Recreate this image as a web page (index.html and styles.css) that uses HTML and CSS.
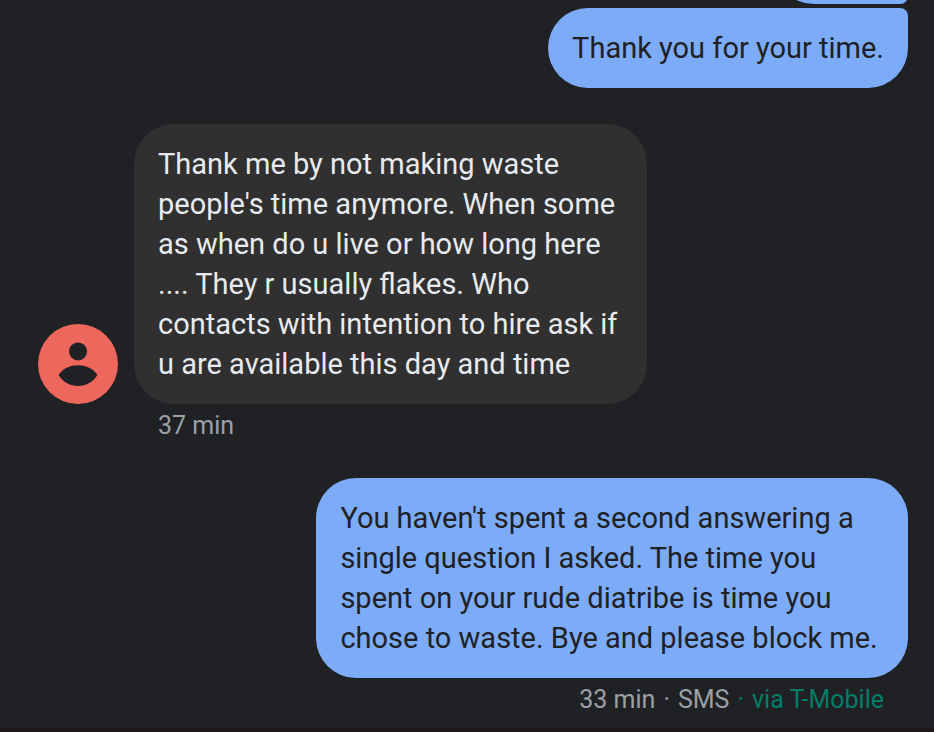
FILE: index.html
```html
<!DOCTYPE html>
<html lang="en">
<head>
<meta charset="utf-8">
<meta name="viewport" content="width=device-width, initial-scale=1">
<title>Messages</title>
<link rel="stylesheet" href="styles.css">
</head>
<body>
<main class="thread">
  <section class="group group-sent">
    <div class="bubble sent sent-first" aria-hidden="true"></div>
    <p class="bubble sent sent-last">Thank you for your time.</p>
  </section>

  <section class="group group-received">
    <svg class="avatar" viewBox="0 0 80 80" role="img" aria-label="Contact">
      <circle class="avatar-disc" cx="40" cy="40" r="40"/>
      <circle class="avatar-person" cx="40" cy="27.4" r="9"/>
      <path class="avatar-person" d="M20.6 51C24.5 44.5 32 41.2 40 41.2S55.5 44.5 59.4 51C54.5 58.5 48 62 40 62S25.500 58.500 20.600 51Z"/>
    </svg>
    <p class="bubble received">Thank me by not making waste<br>people's time anymore. When some<br>as when do u live or how long here<br>.... They r usually flakes. Who<br>contacts with intention to hire ask if<br>u are available this day and time</p>
    <p class="meta">37 min</p>
  </section>

  <section class="group group-sent">
    <p class="bubble sent sent-long">You haven't spent a second answering a<br>single question I asked. The time you<br>spent on your rude diatribe is time you<br>chose to waste. Bye and please block me.</p>
    <p class="meta"><span>33 min</span><span>·</span><span>SMS</span><span class="carrier">·</span><span class="carrier">via T-Mobile</span></p>
  </section>
</main>
</body>
</html>
```
FILE: styles.css
```css
* {
  box-sizing: border-box;
}

body {
  margin: 0;
  background: #202124;
  color: #e8eaed;
  font-family: Roboto, "Liberation Sans", sans-serif;
  font-size: 29px;
  line-height: 40px;
}

p {
  margin: 0;
}

.thread {
  display: flex;
  flex-direction: column;
  justify-content: flex-end;
  gap: 36px;
  height: 100vh;
  padding: 0 26px 12px 38px;
  border-bottom: 4px solid #1d191c;
  overflow: hidden;
}

.group-sent {
  display: flex;
  flex-direction: column;
  align-items: flex-end;
}

.group-received {
  display: grid;
  grid-template-columns: 80px 59%;
  justify-content: start;
  align-items: end;
  column-gap: 16px;
}

.group-received .meta {
  grid-column: 2;
}

.bubble {
  padding: 20px 24px;
  border-radius: 40px;
}

.sent {
  background: #7cacf8;
  color: #202124;
}

.sent-first {
  width: 134px;
  height: 80px;
  margin-bottom: 4px;
  border-bottom-right-radius: 8px;
}

.sent-last {
  border-top-right-radius: 8px;
}

.sent-long {
  min-width: 68%;
}

.received {
  background: #303030;
}

.avatar {
  display: block;
  width: 80px;
  height: 80px;
}

.avatar-disc {
  fill: #ee675c;
}

.avatar-person {
  fill: #202124;
}

.meta {
  display: flex;
  gap: 8px;
  margin-top: 6px;
  padding: 0 24px;
  color: #9aa0a6;
  font-size: 25px;
  line-height: 32px;
}

.carrier {
  color: #047d6a;
}
```
